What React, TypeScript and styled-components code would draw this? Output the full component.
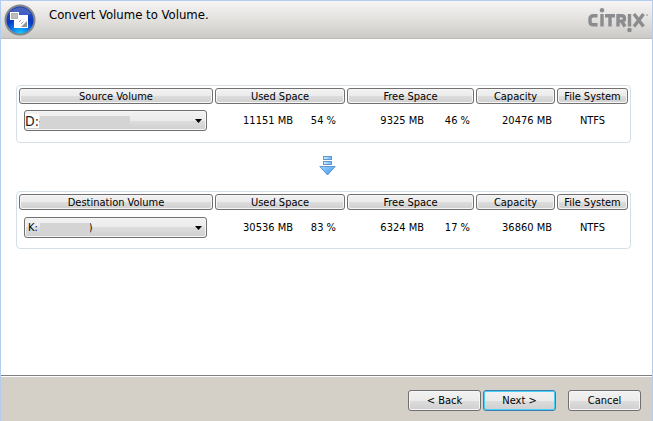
import React from "react";
import styled, { createGlobalStyle } from "styled-components";

const GlobalStyle = createGlobalStyle`
  * { box-sizing: border-box; }
  body {
    margin: 0;
    background: #fff;
    color: #000;
    font: 11px/14px "DejaVu Sans Condensed", "Noto Sans", sans-serif;
  }
`;

const Window = styled.div`
  display: flex;
  flex-direction: column;
  min-height: 100vh;
  border: 1px solid #b3cdee;
  border-bottom: 0;
  background: #fff;
`;

const Header = styled.header`
  display: flex;
  align-items: center;
  height: 38px;
  padding: 0 4px 0 3px;
  border-bottom: 1px solid #bbbab6;
  background: linear-gradient(#f6f5f4, #e2e1de 50%, #cbcac6);
`;

const Title = styled.h1`
  flex: 1;
  margin: 0 0 10px 13px;
  font: 13px/18px "DejaVu Sans Condensed", "Noto Sans", sans-serif;
`;

const Main = styled.main`
  flex: 1;
  display: flex;
  flex-direction: column;
  padding: 46px 21px 0 15px;
`;

const Panel = styled.section`
  height: 58px;
  border: 1px solid #d5dfe5;
  border-radius: 4px;
`;

const Table = styled.table`
  width: 100%;
  table-layout: fixed;
  border-collapse: separate;
  border-spacing: 2px;
`;

const Col = styled.col<{ $w?: number }>`
  width: ${(p) => (p.$w ? `${p.$w}px` : "auto")};
`;

const Th = styled.th`
  height: 16px;
  padding: 1px 0 0;
  border: 1px solid #707070;
  border-radius: 3px;
  background: linear-gradient(#f2f2f2, #ebebeb 50%, #dddddd 50%, #cfcfcf);
  box-shadow: inset 0 0 0 1px #f6f6f6;
  font-weight: normal;
  line-height: 13px;
  text-align: center;
  white-space: nowrap;
`;

const Td = styled.td<{ $align?: string; $end?: number; $top: number }>`
  padding: ${(p) => p.$top}px ${(p) => p.$end ?? 0}px 0 0;
  text-align: ${(p) => p.$align ?? "right"};
  white-space: nowrap;
`;

const Combo = styled.div`
  position: relative;
  display: flex;
  margin: 0 6px 0 5px;
`;

const Select = styled.select<{ $large?: boolean }>`
  appearance: none;
  width: 100%;
  height: 21px;
  margin: 0;
  padding: 0 20px 0 ${(p) => (p.$large ? 0 : 3)}px;
  border: 1px solid #707070;
  border-radius: 3px;
  background:
    ${(p) => (p.$large ? "linear-gradient(#fff, #fff) 0 3px / 14px 14px no-repeat," : "")}
    linear-gradient(#f2f2f2, #ebebeb 50%, #dddddd 50%, #cfcfcf);
  box-shadow: inset 0 0 0 1px #f6f6f6;
  color: ${(p) => (p.$large ? "#222" : "#000")};
  font: ${(p) => (p.$large ? 14 : 11)}px "DejaVu Sans Condensed", "Noto Sans", sans-serif;
`;

const Caret = styled.svg`
  position: absolute;
  right: 5px;
  top: 9px;
  pointer-events: none;
`;

const Mask = styled.span<{ $w: number }>`
  position: absolute;
  left: 16px;
  top: 6px;
  width: ${(p) => p.$w}px;
  height: 12px;
  background: #d4d4d4;
  pointer-events: none;
`;

const Arrow = styled.svg`
  align-self: center;
  margin: 13px 0 15px 7px;
`;

const Footer = styled.footer`
  display: flex;
  justify-content: flex-end;
  gap: 2px;
  height: 46px;
  padding: 14px 11px 0;
  border-top: 1px solid #808080;
  box-shadow: inset 0 1px #fff;
  background: #d4d0c8;
`;

const Button = styled.button<{ $primary?: boolean; $apart?: boolean }>`
  width: 73px;
  height: 21px;
  margin-left: ${(p) => (p.$apart ? 10 : 0)}px;
  padding: 0;
  border: 1px solid ${(p) => (p.$primary ? "#3c7fb1" : "#707070")};
  border-radius: 3px;
  background: linear-gradient(#f2f2f2, #ebebeb 50%, #dddddd 50%, #cfcfcf);
  box-shadow: inset 0 0 0 1px ${(p) => (p.$primary ? "#48d0f8" : "#f6f6f6")};
  color: #000;
  font: 11px/14px "DejaVu Sans Condensed", "Noto Sans", sans-serif;
`;

const VolumeIcon = () => (
  <svg width="32" height="32" viewBox="0 0 32 32" aria-hidden="true">
    <defs>
      <radialGradient id="ball" cx="50%" cy="100%" r="85%">
        <stop offset="0" stopColor="#19d2ff" />
        <stop offset="0.35" stopColor="#0a83ee" />
        <stop offset="0.65" stopColor="#0838c4" />
        <stop offset="1" stopColor="#2747b4" />
      </radialGradient>
    </defs>
    <circle cx="16" cy="16" r="14.5" fill="url(#ball)" stroke="#85878c" strokeWidth="2" />
    <path d="M5 10a12.5 12.5 0 0 1 22 0q-11 5-22 0z" fill="#fff" opacity="0.16" />
    <rect x="10" y="11" width="14" height="13" fill="#fff" />
    <rect x="6.5" y="8.5" width="8" height="7" fill="#bdbdbd" stroke="#fff" />
    <path d="M7.500 9.500h6v5h-6z" fill="none" stroke="#aaa" strokeWidth="0.600" />
    <path d="M15 18l2-2M17 20l2.500-2.500" stroke="#999" fill="none" />
    <path d="M23 17v6h-6z" fill="#949494" />
  </svg>
);

const CitrixLogo = () => (
  <svg width="62" height="28" viewBox="0 0 62 28" role="img" aria-label="Citrix">
    <g fill="none" stroke="#8b8c8f" strokeWidth="3.400">
      <path d="M11.500 9.700H7.500Q4 9.700 4 13v2.500q0 3.300 3.500 3.300h4" />
      <path d="M16 8v12.500M19 9.700h10M24 9.700v10.800" />
      <path d="M32 20.500V9.700h3.500q3 0 3 2.700t-3 2.700H32M35.500 15l3.500 5.500" />
      <path d="M43.500 8V20.500M48 8l9.500 12.500M57.500 8L48 20.500" />
    </g>
    <circle cx="16" cy="4.300" r="2.200" fill="#8b8c8f" />
    <circle cx="43.500" cy="24" r="2.300" fill="#8b8c8f" />
    <circle cx="61" cy="9" r="0.800" fill="#8b8c8f" />
  </svg>
);

const DownArrow = () => (
  <Arrow width="17" height="20" viewBox="0 0 17 20" aria-hidden="true">
    <defs>
      <linearGradient id="down" x1="0" y1="0" x2="1" y2="1">
        <stop offset="0" stopColor="#a8d8ff" />
        <stop offset="1" stopColor="#2f90f2" />
      </linearGradient>
      <linearGradient id="bar">
        <stop offset="0" stopColor="#d6f0ff" />
        <stop offset="1" stopColor="#62b4f8" />
      </linearGradient>
    </defs>
    <g stroke="#6296cc">
      <rect x="4.500" y="0.500" width="8" height="3" fill="url(#bar)" />
      <rect x="4.500" y="5.500" width="8" height="3" fill="url(#bar)" />
      <path d="M0.800 10.500h15.400L8.500 19z" fill="url(#down)" />
    </g>
  </Arrow>
);

type Volume = {
  label: string;
  name: string;
  large?: boolean;
  mask: number;
  top: number;
  used: [string, string];
  free: [string, string];
  capacity: string;
};

const source: Volume = {
  label: "Source Volume",
  name: "D:-",
  large: true,
  mask: 90,
  top: 4,
  used: ["11151 MB", "54 %"],
  free: ["9325 MB", "46 %"],
  capacity: "20476 MB",
};

const destination: Volume = {
  label: "Destination Volume",
  name: "K: (" + "\u00a0".repeat(14) + ")",
  mask: 50,
  top: 5,
  used: ["30536 MB", "83 %"],
  free: ["6324 MB", "17 %"],
  capacity: "36860 MB",
};

const VolumePanel = ({ v }: { v: Volume }) => (
  <Panel>
    <Table>
      <colgroup>
        <Col />
        <Col $w={78} />
        <Col $w={50} />
        <Col $w={77} />
        <Col $w={48} />
        <Col $w={79} />
        <Col $w={71} />
      </colgroup>
      <thead>
        <tr>
          <Th scope="col">{v.label}</Th>
          <Th scope="colgroup" colSpan={2}>Used Space</Th>
          <Th scope="colgroup" colSpan={2}>Free Space</Th>
          <Th scope="col">Capacity</Th>
          <Th scope="col">File System</Th>
        </tr>
      </thead>
      <tbody>
        <tr>
          <Td $top={v.top} $align="left">
            <Combo>
              <Select aria-label={v.label} $large={v.large}>
                <option>{v.name}</option>
              </Select>
              <Mask $w={v.mask} />
              <Caret width="7" height="4" viewBox="0 0 7 4" aria-hidden="true">
                <path d="M0 0h7L3.500 4z" />
              </Caret>
            </Combo>
          </Td>
          <Td $top={v.top}>{v.used[0]}</Td>
          <Td $top={v.top} $end={9}>{v.used[1]}</Td>
          <Td $top={v.top}>{v.free[0]}</Td>
          <Td $top={v.top} $end={4}>{v.free[1]}</Td>
          <Td $top={v.top} $end={3}>{v.capacity}</Td>
          <Td $top={v.top} $align="center">NTFS</Td>
        </tr>
      </tbody>
    </Table>
  </Panel>
);

export default function App() {
  return (
    <>
      <GlobalStyle />
      <Window>
        <Header>
          <VolumeIcon />
          <Title>Convert Volume to Volume.</Title>
          <CitrixLogo />
        </Header>
        <Main>
          <VolumePanel v={source} />
          <DownArrow />
          <VolumePanel v={destination} />
        </Main>
        <Footer>
          <Button type="button">&lt; Back</Button>
          <Button type="button" $primary>Next &gt;</Button>
          <Button type="button" $apart>Cancel</Button>
        </Footer>
      </Window>
    </>
  );
}
